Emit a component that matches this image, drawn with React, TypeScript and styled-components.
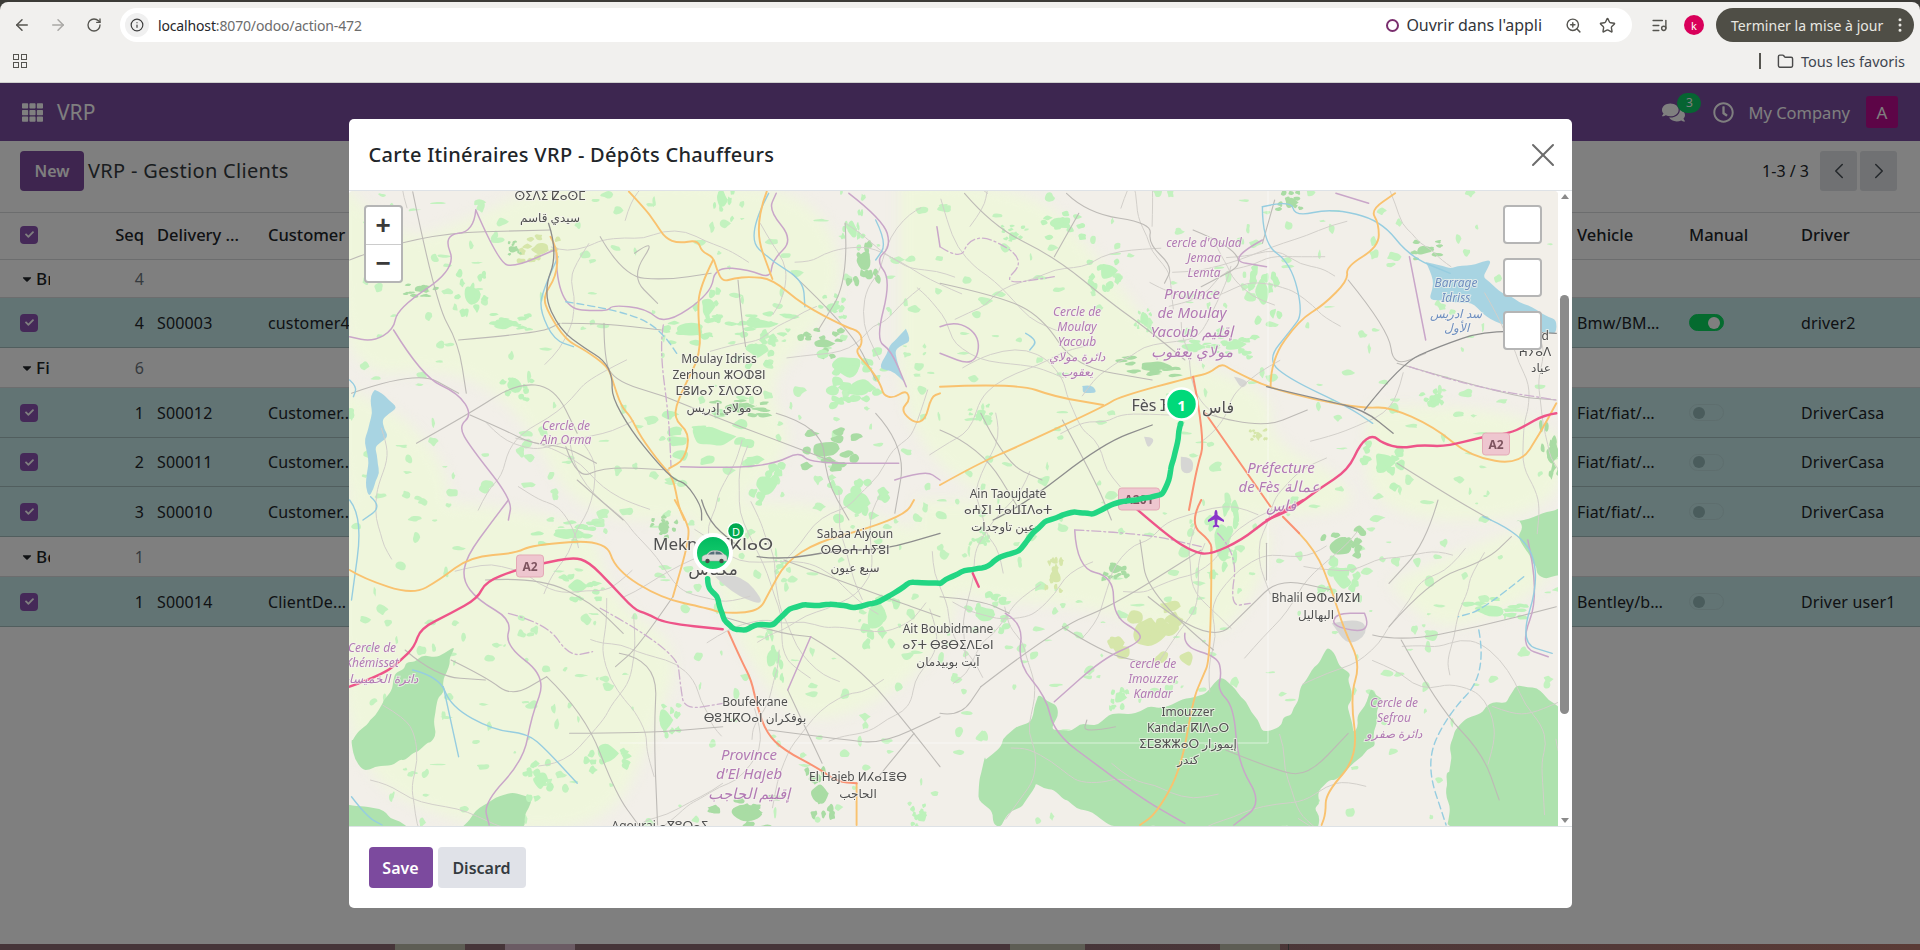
import styled, { createGlobalStyle } from "styled-components";
import {
  ArrowLeft,
  ArrowRight,
  RotateCw,
  Info,
  ZoomIn,
  Star,
  ListMusic,
  EllipsisVertical,
  Folder,
  X,
  ChevronLeft,
  ChevronRight,
} from "lucide-react";
import { FaCaretDown, FaCheck, FaComments, FaRegClock, FaTh } from "react-icons/fa";

const FONT = `"Noto Sans", "DejaVu Sans", sans-serif`;

const GlobalStyle = createGlobalStyle`
  * { box-sizing: border-box; }
  html, body { margin: 0; padding: 0; height: 100%; overflow: hidden; }
  body { font-family: ${FONT}; color: #212529; background: #fff; }
`;

const Screen = styled.div`
  height: 950px;
  display: flex;
  flex-direction: column;
  overflow: hidden;
`;

/* ---------- browser chrome ---------- */

const Chrome = styled.header`
  height: 83px;
  flex: none;
  background: #3c3b37;
  padding-top: 2px;
`;

const ChromeInner = styled.div`
  height: 81px;
  background: #f1f0ee;
  border-radius: 8px 8px 0 0;
  border-bottom: 1px solid #cfcfcd;
`;

const Toolbar = styled.div`
  height: 40px;
  display: flex;
  align-items: center;
  padding: 6px 6px 0 13px;
  color: #55544f;
`;

const NavIcon = styled.span<{ $off?: boolean }>`
  width: 30px;
  margin-right: 6px;
  display: flex;
  color: ${(p) => (p.$off ? "#a9a8a5" : "#55544f")};
  &:nth-child(3) { margin-right: 4px; margin-left: 1px; }
`;

const UrlBar = styled.div`
  width: 1512px;
  flex: none;
  height: 34px;
  background: #fff;
  border-radius: 17px;
  display: flex;
  align-items: center;
  padding: 0 6px 0 5px;
`;

const InfoChip = styled.span`
  width: 24px;
  height: 24px;
  border-radius: 50%;
  background: #f0f0f0;
  display: flex;
  align-items: center;
  justify-content: center;
  color: #3d3d3d;
  margin-right: 9px;
`;

const UrlText = styled.span`
  font-size: 14px;
  color: #6c6c6c;
  letter-spacing: -0.15px;
  b { font-weight: 400; color: #26262a; }
`;

const OpenApp = styled.span`
  margin-left: auto;
  display: flex;
  align-items: center;
  gap: 7px;
  font-size: 16px;
  color: #33353a;
  margin-right: 23px;
  letter-spacing: -0.05px;
  i {
    width: 13px;
    height: 13px;
    border: 2.5px solid #7a2e6e;
    border-radius: 50%;
  }
`;

const BarIcon = styled.span<{ $gap?: number; $lead?: number }>`
  display: flex;
  color: #55544f;
  margin-right: ${(p) => p.$gap ?? 0}px;
  margin-left: ${(p) => p.$lead ?? 0}px;
`;

const ProfileDot = styled.span`
  width: 20px;
  height: 20px;
  border-radius: 50%;
  background: #d9005a;
  color: #fff;
  font-size: 11px;
  display: flex;
  align-items: center;
  justify-content: center;
  margin: 0 12px 0 16px;
`;

const UpdatePill = styled.div`
  width: 198px;
  height: 34px;
  border-radius: 17px;
  background: #4f4e46;
  color: #e9e8e2;
  font-size: 14px;
  display: flex;
  align-items: center;
  justify-content: space-between;
  padding: 0 5px 0 15px;
  white-space: nowrap;
  letter-spacing: 0.05px;
`;

const Bookmarks = styled.div`
  height: 40px;
  display: flex;
  align-items: center;
  padding: 0 15px 2px 13px;
  color: #4a4a4a;
`;

const AppsGrid = styled.span`
  display: grid;
  grid-template-columns: 6px 6px;
  gap: 2px;
  i {
    width: 6px;
    height: 6px;
    border: 1.4px solid #55544f;
  }
`;

const BookmarkSep = styled.span`
  width: 1.5px;
  height: 16px;
  background: #55544f;
  margin: 0 16px 0 auto;
`;

const BookmarkText = styled.span`
  font-size: 14.5px;
  margin-left: 7px;
  color: #3f4650;
`;

/* ---------- odoo page under the dialog ---------- */

const Page = styled.main`
  position: relative;
  flex: 1;
  background: #fff;
  overflow: hidden;
`;

const NavBar = styled.nav`
  height: 58px;
  background: #7a4ca0;
  color: #fff;
  display: flex;
  align-items: center;
  padding: 0 22px;
`;

const AppName = styled.span`
  font-size: 21px;
  margin-left: 14px;
`;

const NavRight = styled.div`
  margin-left: auto;
  display: flex;
  align-items: center;
`;

const ChatIcon = styled.span`
  position: relative;
  display: flex;
  margin-right: 28px;
`;

const ChatBadge = styled.span`
  position: absolute;
  top: -8px;
  left: 15px;
  width: 24px;
  height: 20px;
  border-radius: 10px;
  background: #0cc864;
  font-size: 12px;
  display: flex;
  align-items: center;
  justify-content: center;
`;

const CompanyName = styled.span`
  font-size: 16.5px;
  margin: 0 16px 0 14px;
`;

const Avatar = styled.span`
  width: 32px;
  height: 32px;
  border-radius: 3px;
  background: #bb0a8f;
  font-size: 17px;
  display: flex;
  align-items: center;
  justify-content: center;
`;

const ControlPanel = styled.div`
  height: 71px;
  display: flex;
  align-items: flex-start;
  padding: 10px 23px 0 20px;
`;

const NewButton = styled.span`
  width: 64px;
  height: 40px;
  border-radius: 4px;
  background: #7c4a9e;
  color: #fff;
  font-size: 16px;
  font-weight: 600;
  display: flex;
  align-items: center;
  justify-content: center;
`;

const PageTitle = styled.span`
  font-size: 20px;
  line-height: 40px;
  margin-left: 4px;
  color: #343a40;
  letter-spacing: 0.3px;
`;

const Pager = styled.div`
  margin-left: auto;
  display: flex;
  align-items: center;
  gap: 3px;
  font-size: 16px;
  height: 40px;
  span:first-child { margin-right: 8px; }
`;

const PagerButton = styled.span`
  width: 37px;
  height: 40px;
  border-radius: 3px;
  background: #e0e2e6;
  display: flex;
  align-items: center;
  justify-content: center;
  color: #495057;
`;

const Row = styled.div<{ $h: number; $tone?: "head" | "group" | "data" }>`
  display: grid;
  grid-template-columns: 105px 44px 111px 1309px 112px 112px 127px;
  align-items: center;
  height: ${(p) => p.$h}px;
  padding-bottom: ${(p) => (p.$tone === "head" ? 3 : 0)}px;
  font-size: ${(p) => (p.$tone === "head" ? 16.5 : 16)}px;
  background: ${(p) => (p.$tone === "data" ? "#c4e8e8" : "transparent")};
  border-bottom: 1px solid ${(p) => (p.$tone === "data" ? "#a3bcbc" : "#d8dadd")};
  color: #212529;
  font-weight: ${(p) => (p.$tone === "head" ? 500 : 400)};
  letter-spacing: ${(p) => (p.$tone === "head" ? 0 : 0.15)}px;
`;

const TopRule = styled.div`
  height: 1px;
  background: #d8dadd;
`;

const Cell = styled.div<{ $muted?: boolean }>`
  padding: 0 8px;
  white-space: nowrap;
  overflow: hidden;
  text-overflow: ellipsis;
  color: ${(p) => (p.$muted ? "#6c757d" : "inherit")};
`;

const SeqCell = styled(Cell)`
  padding: 0 5px 0 0;
  text-align: right;
`;

const CheckCell = styled.div`
  padding-left: 20px;
  display: flex;
`;

const CheckBox = styled.span`
  width: 18px;
  height: 18px;
  border-radius: 4px;
  background: #8a52b0;
  color: #fff;
  display: flex;
  align-items: center;
  justify-content: center;
`;

const GroupCell = styled.div`
  padding-left: 20px;
  display: flex;
  align-items: center;
  gap: 2px;
  font-weight: 500;
`;

const GroupName = styled.span`
  width: 14px;
  overflow: hidden;
  white-space: nowrap;
  font-size: 17px;
`;

const Toggle = styled.span<{ $on?: boolean }>`
  width: 35px;
  height: 17px;
  border-radius: 9px;
  display: flex;
  align-items: center;
  padding: 0 3px;
  justify-content: ${(p) => (p.$on ? "flex-end" : "flex-start")};
  background: ${(p) => (p.$on ? "#0ad65e" : "transparent")};
  border: 1px solid ${(p) => (p.$on ? "#0ad65e" : "#bcdcdc")};
  i {
    width: 12px;
    height: 12px;
    border-radius: 50%;
    background: ${(p) => (p.$on ? "#fff" : "#94b8b8")};
  }
`;

const Backdrop = styled.div`
  position: absolute;
  inset: 0;
  background: rgba(0, 0, 0, 0.5);
  display: flex;
  justify-content: center;
  align-items: flex-start;
  padding-top: 36px;
`;

/* ---------- dialog ---------- */

const Modal = styled.section`
  width: 1223px;
  height: 789px;
  background: #fff;
  border-radius: 5px;
  display: flex;
  flex-direction: column;
  overflow: hidden;
`;

const ModalHeader = styled.div`
  height: 72px;
  flex: none;
  display: flex;
  align-items: center;
  justify-content: space-between;
  padding: 0 9px 0 20px;
  border-bottom: 1px solid #dee2e6;
`;

const ModalTitle = styled.h4`
  margin: 0;
  font-size: 20px;
  font-weight: 500;
  letter-spacing: 0.3px;
  color: #212529;
`;

const CloseIcon = styled.span`
  display: flex;
  color: #6c6c6c;
`;

const MapFrame = styled.div`
  height: 635px;
  flex: none;
  display: flex;
`;

const MapCanvas = styled.div`
  position: relative;
  width: 1209px;
  height: 635px;
  overflow: hidden;
  border-radius: 4px 4px 0 0;
  background: #f2efe9;
`;

const ZoomBar = styled.div`
  position: absolute;
  top: 14px;
  left: 15px;
  width: 39px;
  border: 2px solid #b5b5b5;
  border-radius: 4px;
  background: #fff;
  overflow: hidden;
`;

const ZoomButton = styled.div`
  height: 37px;
  display: flex;
  align-items: center;
  justify-content: center;
  font: 700 26px "Liberation Sans", sans-serif;
  color: #3a3a3a;
  & + & { border-top: 1px solid #ccc; }
`;

const SideControls = styled.div`
  position: absolute;
  top: 14px;
  right: 16px;
  display: flex;
  flex-direction: column;
  gap: 14px;
`;

const EmptyControl = styled.div`
  width: 39px;
  height: 39px;
  background: #fff;
  border: 2px solid #b5b5b5;
  border-radius: 4px;
`;

const ScrollTrack = styled.div`
  width: 14px;
  display: flex;
  flex-direction: column;
  align-items: center;
  background: #fff;
  padding: 3px 0;
`;

const ScrollArrow = styled.span<{ $down?: boolean }>`
  width: 0;
  height: 0;
  border-left: 4px solid transparent;
  border-right: 4px solid transparent;
  ${(p) => (p.$down ? "border-top: 5px solid #8a8a8a;" : "border-bottom: 5px solid #8a8a8a;")}
`;

const ScrollThumb = styled.div`
  width: 9px;
  height: 419px;
  margin: 96px 0 auto;
  border-radius: 5px;
  background: #8b8b8b;
`;

const ModalFooter = styled.div`
  flex: 1;
  display: flex;
  align-items: flex-start;
  gap: 5px;
  padding: 20px 20px 0;
  border-top: 1px solid #dee2e6;
`;

const FooterButton = styled.button<{ $primary?: boolean }>`
  height: 41px;
  width: ${(p) => (p.$primary ? 64 : 88)}px;
  border: none;
  border-radius: 4px;
  font-family: ${FONT};
  font-size: 16px;
  font-weight: 600;
  background: ${(p) => (p.$primary ? "#7c4a9e" : "#e0e2e8")};
  color: ${(p) => (p.$primary ? "#fff" : "#343a40")};
`;

const DesktopStrip = styled.footer`
  height: 6px;
  flex: none;
  display: flex;
  overflow: hidden;
  background: linear-gradient(90deg, #463539 0%, #463539 55%, #5a3b36 100%);
`;

const StripPiece = styled.span<{ $w: number; $ml: number; $c: string }>`
  width: ${(p) => p.$w}px;
  margin-left: ${(p) => p.$ml}px;
  background: ${(p) => p.$c};
  flex: none;
`;

/* ---------- map data: every point list is read off one zoomed crop ---------- */

type Pt = [number, number];

const tile = (ox: number, oy: number, sx: number) => (s: string): Pt[] =>
  s
    .trim()
    .split(/\s+/)
    .map((p) => {
      const [x, y] = p.split(",").map(Number);
      return [ox + x * sx, oy + y / 3] as Pt;
    });

const nw = tile(340, 180, 600 / 1568);
const ne = tile(940, 180, 640 / 1568);
const sw = tile(340, 500, 600 / 1568);
const se = tile(940, 500, 640 / 1568);

// same numbers every run
let seed = 4711;
const rnd = () => {
  seed = (seed * 1664525 + 1013904223) >>> 0;
  return seed / 4294967296;
};

// rounds a polyline through the midpoints of its segments
const curve = (pts: Pt[]) => {
  let d = `M${pts[0][0].toFixed(1)} ${pts[0][1].toFixed(1)}`;
  for (let i = 1; i < pts.length - 1; i++) {
    const mx = (pts[i][0] + pts[i + 1][0]) / 2;
    const my = (pts[i][1] + pts[i + 1][1]) / 2;
    d += `Q${pts[i][0].toFixed(1)} ${pts[i][1].toFixed(1)} ${mx.toFixed(1)} ${my.toFixed(1)}`;
  }
  const l = pts[pts.length - 1];
  return `${d}L${l[0].toFixed(1)} ${l[1].toFixed(1)}`;
};

// breaks each segment up and shakes the points, for natural edges
const rough = (pts: Pt[], amp: number, step = 9): Pt[] => {
  const out: Pt[] = [];
  for (let i = 0; i < pts.length - 1; i++) {
    const [ax, ay] = pts[i];
    const [bx, by] = pts[i + 1];
    const n = Math.max(1, Math.round(Math.hypot(bx - ax, by - ay) / step));
    for (let k = 0; k < n; k++) {
      out.push([ax + ((bx - ax) * k) / n + (rnd() - 0.5) * amp, ay + ((by - ay) * k) / n + (rnd() - 0.5) * amp]);
    }
  }
  out.push(pts[pts.length - 1]);
  return out;
};

const area = (pts: Pt[]) => `${curve([...pts, pts[0]])}Z`;
const roughArea = (pts: Pt[], amp: number) => area(rough([...pts, pts[0]], amp));

const blob = (cx: number, cy: number, rx: number, ry: number) => {
  const n = 9;
  const pts: Pt[] = Array.from({ length: n }, (_, i) => {
    const a = (i / n) * Math.PI * 2;
    const r = 0.5 + rnd() * 0.8;
    return [cx + Math.cos(a) * rx * r, cy + Math.sin(a) * ry * r] as Pt;
  });
  return area(pts);
};

const farmland = [
  nw("0,0 150,200 330,120 560,0 1000,0 1250,60 1330,300 1220,480 1110,620 1200,800 1000,1020 620,1020 480,700 300,560 0,600"),
  nw("0,620 200,700 330,1020 0,1020"),
  ne("-100,0 220,0 400,250 560,520 820,640 800,780 1000,900 1010,1020 -100,1020"),
  ne("1050,680 1530,660 1530,1020 1040,1020"),
  sw("0,0 650,0 700,300 900,440 820,700 700,990 330,990 0,800"),
  sw("900,0 1568,0 1640,420 1250,720 1050,480"),
  se("-60,0 820,0 800,240 660,450 420,320 -60,290"),
  se("1100,250 1530,0 1530,230 1240,420"),
];

const forests = [
  se("110,770 230,650 250,580 290,620 280,700 400,660 450,640 560,620 640,590 690,530 760,630 800,700 860,640 900,520 950,440 1000,520 1010,700 1050,560 1080,600 1060,740 1000,800 920,880 930,985 440,985 240,850 150,985 100,900"),
  se("1240,820 1260,680 1400,590 1420,545 1530,630 1530,985 1250,985"),
  se("1420,60 1530,20 1530,230 1470,230 1420,120"),
  sw("30,720 100,640 170,480 250,470 300,440 280,520 240,720 130,800 50,800"),
  sw("10,900 100,930 180,985 10,985"),
  sw("310,985 420,880 500,900 480,985"),
];

const lakes = [
  nw("90,630 110,640 150,680 110,720 125,770 90,800 105,880 75,950 65,920 75,850 65,780 85,700 80,650"),
  nw("1480,445 1495,480 1450,510 1470,590 1480,615 1440,570 1410,565 1435,500 1460,470"),
  ne("1190,245 1250,265 1310,250 1350,240 1330,290 1380,340 1460,390 1510,420 1510,460 1420,450 1350,420 1300,370 1200,360 1210,300"),
  ne("350,620 370,610 385,640 350,640"),
];

const P = "#bdf2bb";
const D = "#a9dca4";
const K = "#d6e6aa";
// crop, centre x, centre y, half width, half height, colour: in crop units
const patchSpots: [(s: string) => Pt[], number, number, number, number, string][] = [
  [nw, 345, 340, 30, 45, P], [nw, 430, 430, 45, 20, P], [nw, 210, 330, 32, 16, D], [nw, 520, 210, 38, 30, K],
  [nw, 450, 205, 16, 16, D], [nw, 920, 450, 50, 30, P], [nw, 960, 380, 25, 40, P], [nw, 1100, 430, 60, 25, P],
  [nw, 1090, 510, 40, 40, P], [nw, 970, 770, 85, 50, P], [nw, 1050, 680, 60, 20, D], [nw, 1270, 810, 60, 40, D],
  [nw, 1260, 490, 40, 30, D], [nw, 1330, 560, 60, 50, P], [nw, 1360, 620, 50, 40, P], [nw, 1370, 240, 30, 50, D],
  [nw, 1350, 970, 50, 50, P], [nw, 1110, 910, 40, 50, P], [nw, 460, 620, 30, 30, P], [nw, 1290, 380, 25, 25, P],
  [nw, 1000, 60, 20, 40, P], [nw, 1340, 150, 20, 40, P],
  [ne, 300, 130, 40, 30, P], [ne, 410, 270, 30, 40, P], [ne, 790, 340, 30, 60, P], [ne, 520, 560, 60, 20, D],
  [ne, 860, 70, 25, 25, D], [ne, 1190, 210, 30, 20, D], [ne, 1210, 660, 25, 30, P], [ne, 1090, 850, 40, 50, P],
  [ne, 180, 165, 20, 20, P], [ne, 100, 700, 20, 20, P], [ne, 720, 490, 40, 30, P], [ne, 500, 420, 15, 25, P],
  [ne, 1500, 820, 20, 60, D], [ne, 620, 500, 40, 15, P], [ne, 780, 770, 15, 15, K],
  [sw, 590, 100, 60, 25, P], [sw, 850, 85, 25, 25, D], [sw, 1060, 940, 60, 40, D], [sw, 520, 840, 30, 40, P],
  [sw, 700, 760, 40, 40, P], [sw, 1250, 880, 30, 50, D], [sw, 850, 660, 25, 40, P], [sw, 1130, 470, 20, 50, P],
  [sw, 1400, 350, 40, 60, P], [sw, 620, 260, 40, 30, P], [sw, 1520, 950, 20, 30, P], [sw, 1150, 200, 15, 15, P],
  [se, 100, 120, 20, 25, P], [se, 430, 205, 25, 25, D], [se, 115, 340, 35, 40, P], [se, 985, 140, 40, 40, D],
  [se, 985, 230, 35, 50, P], [se, 515, 400, 75, 70, K], [se, 285, 225, 20, 35, K], [se, 690, 130, 30, 80, P],
  [se, 440, 590, 20, 30, P], [se, 1350, 330, 60, 25, P],
];

// each spot becomes a core with a few loose pieces around it
const patchShapes = patchSpots.flatMap(([t, x, y, w, h, c]) => {
  const [[cx, cy]] = t(`${x},${y}`);
  const [[ex]] = t(`${x + w},${y}`);
  const rx = ex - cx;
  const ry = h / 3;
  const loose = Array.from({ length: 11 }, () => ({
    d: blob(cx + (rnd() - 0.5) * rx * 2.8, cy + (rnd() - 0.5) * ry * 2.8, rx * 0.3, ry * 0.3),
    c,
  }));
  return [{ d: roughArea(
    Array.from({ length: 8 }, (_, i) => {
      const a = (i / 8) * Math.PI * 2;
      const r = 0.45 + rnd() * 0.4;
      return [cx + Math.cos(a) * rx * r, cy + Math.sin(a) * ry * r] as Pt;
    }), 3, 5), c }, ...loose];
});

const scatter = Array.from({ length: 720 }, () =>
  blob(349 + rnd() * 1209, 191 + rnd() * 635, 1.5 + rnd() * 6, 1 + rnd() * 5)
);

// the thin road web between the named roads
const webRoads: Pt[][] = Array.from({ length: 85 }, () => {
  let x = 349 + rnd() * 1209;
  let y = 191 + rnd() * 635;
  let a = rnd() * Math.PI * 2;
  const steps = 5 + Math.floor(rnd() * 8);
  const pts: Pt[] = [[x, y]];
  for (let i = 0; i < steps; i++) {
    a += (rnd() - 0.5) * 1.1;
    const len = 12 + rnd() * 16;
    x += Math.cos(a) * len;
    y += Math.sin(a) * len;
    pts.push([x, y]);
  }
  return pts;
});

const localRoads = [
  nw("190,35 250,370 310,490 330,640"), nw("25,240 200,160 550,150"), nw("580,430 690,430 840,450"),
  nw("690,430 690,520 710,600 850,650"), nw("310,480 520,460 575,430"), nw("340,705 430,750 500,790 590,800 670,850"),
  nw("590,800 620,900 690,860 860,870"), nw("620,900 740,1020"), nw("200,790 340,700 460,610 560,620 620,760"),
  nw("680,170 740,290 850,300 970,280"), nw("770,220 830,170 760,290 830,370"), nw("1040,300 1050,420 1060,500"),
  nw("1140,700 1260,740 1270,900 1330,1020"), nw("1180,280 1330,440 1400,600"), nw("1320,130 1330,300 1250,450"),
  nw("850,650 1000,720 1140,780 1300,850"), nw("1400,700 1480,800 1450,1000"), nw("30,640 200,570 310,640"),
  ne("60,40 130,140 280,230 420,370 500,440 600,540"), ne("280,230 340,100"), ne("310,40 360,100 520,130 510,190 570,260 550,310"),
  ne("0,310 150,350 250,410 330,560 520,600"), ne("620,150 780,230 640,320"), ne("1000,300 1100,450 1110,560 1190,520"),
  ne("1120,550 1400,650 1510,660"), ne("100,700 160,850 250,900"), ne("300,720 380,900 420,1020"), ne("650,700 780,750 900,690"),
  ne("1120,850 1250,950 1350,1020"), ne("0,750 100,800 200,1000"), ne("820,60 790,190"),
  sw("1230,410 1350,490 1500,700 1568,800"), sw("380,240 520,230 660,310 740,400"), sw("290,480 380,530 450,590 540,530"),
  sw("540,530 640,640 720,880 780,975"), sw("730,460 830,480 820,700 830,975"), sw("1000,350 1150,400 1230,410"),
  sw("1120,690 1320,720 1420,730 1568,650"), sw("600,700 800,700 1000,680"), sw("170,450 250,530 380,540"),
  sw("870,290 780,440 720,500"), sw("1170,570 1260,790"), sw("1400,840 1500,700"), sw("1160,180 1420,290 1568,350"),
  se("0,290 100,300 170,340"), se("100,560 290,380 420,320 640,150"), se("300,380 400,460 510,490"), se("510,290 660,440 760,320 830,235 960,270"),
  se("1130,420 1220,620 1330,760 1370,900"), se("1060,405 1130,425 1320,380 1510,320"), se("1100,380 1200,240 1340,180 1400,110"),
  se("670,450 510,290 490,120"), se("0,640 50,650 100,560"), se("700,750 820,810 900,830 1000,700"), se("430,680 350,700 360,660"),
  se("1220,0 1190,130 1100,250"), se("800,130 800,240"),
];

const boundaries = [
  nw("355,90 350,155 270,165 305,265 150,385 140,450 85,485 25,470"), nw("355,90 415,250 460,260 560,210"),
  nw("140,450 215,590 310,640 345,705 310,740 340,800 450,960 440,1020"),
  nw("565,215 565,385 700,395 710,375 800,385 850,435 970,340 980,260 1070,270 1125,295 1130,240 1185,180 1120,90 1140,40"),
  nw("890,860 1030,865 1140,850 1200,815 1230,850 1460,850"), nw("1330,40 1420,120 1440,200 1400,240 1440,300 1400,480 1440,510 1480,620"),
  nw("1560,140 1568,200"), nw("1450,900 1530,870 1568,900"),
  ne("0,440 40,420 100,470 85,560 0,520"), ne("790,180 700,240 800,260"), ne("1150,230 1190,480"), ne("970,40 1050,70"),
  sw("440,0 400,60 330,170 320,240 360,300 450,360 430,435 540,530 500,650 480,780 375,910 390,975"),
  sw("1230,410 1170,570"), se("1440,120 1470,280 1420,440 1490,470"), se("330,90 335,205 425,230 425,350 495,400 485,430 400,475 280,605"),
  se("160,340 205,370 190,490 260,590 280,700 390,800 500,900 600,970"),
  se("600,400 595,440 680,470 690,520 680,570 720,620 730,790 790,910 720,975"), se("1040,340 1060,400 960,380 970,340 1040,340"),
];

const dashedBoundaries = [
  nw("845,435 835,500 860,720 865,860"),
  ne("0,200 50,240 70,180 120,170 210,240 150,315 280,290"),
  ne("1150,560 1300,620 1510,660"),
  sw("440,340 540,370 600,470 660,455"),
  sw("680,325 880,450 890,560 900,630 1000,610"),
  se("680,100 730,160 710,320 760,310"),
  se("330,90 500,100 640,140"),
];

const rivers = [
  nw("1120,40 1060,170 1130,245 1210,300 1215,380"), nw("570,230 525,340 525,400 560,480 610,500"),
  nw("25,600 45,620 35,650"), nw("1400,120 1430,190 1400,240"), nw("80,950 110,980 60,1020"),
  ne("790,80 790,190 860,250 890,400 860,450 800,540 860,600 1000,680 1060,730"),
  ne("790,80 860,60 870,110 960,85 1080,120 1150,230 1250,280"),
  ne("210,460 240,480 220,510"),
  sw("190,510 260,530 290,620 400,690 490,700 540,750 620,850"), sw("270,560 310,770"), sw("25,0 60,50 30,300"),
  sw("30,890 70,950 110,975"),
  se("1330,50 1430,100 1470,230 1420,430 1500,460"),
];

const dashedRivers = [
  nw("590,365 700,385 800,420 850,470 880,520"),
  se("1320,390 1340,520 1240,650 1190,790 1240,975"),
  se("1430,230 1330,330 1270,350"),
];

const primaries = [
  nw("755,35 800,90 825,130 850,175 885,190 935,180 945,215 975,230 985,270 1000,305 1030,295 1070,290 1130,297 1210,375 1320,440 1360,455 1365,495 1345,515 1390,570 1415,620 1420,645 1445,655 1480,630 1490,660 1465,690 1500,730 1530,720 1545,650 1568,640"),
  nw("975,240 940,320 935,400 945,520 890,640 870,715 915,760 900,840 860,865"),
  nw("1115,35 1080,140 1130,297"),
  nw("550,170 570,210 565,290 530,350 545,400 590,480 640,510 700,560 712,600 735,680 760,710 785,770 840,855 870,890 885,980 900,1020"),
  ne("0,915 95,850 190,800 400,680 440,650 620,590 660,580 690,550 715,570 800,620 920,660 1040,685 1100,680 1210,740 1300,830 1420,855 1470,760 1510,670"),
  ne("0,620 190,610 280,650 400,675"),
  ne("810,620 810,540 880,420 940,375 1000,300 995,260 1075,200 1075,130 1055,90 1115,40"),
  sw("25,210 60,235 190,285 260,240 340,170 460,160 500,135 695,118 720,210 840,295 960,325 1000,340 1095,335 1120,280 1165,185 1250,125 1380,85 1480,40 1500,0"),
  sw("875,0 905,60 915,110 870,290"),
  sw("1350,850 1350,975"),
  se("665,150 665,470 640,540 620,600 590,810 530,940 490,975"),
  se("880,100 920,150 960,270 990,390 1030,490 1005,590 1025,770 945,880 945,940 935,975"),
];

const trunks = [
  sw("1015,395 1050,485 1075,540 1090,620 1115,700 1160,750 1250,805 1300,845 1350,850"),
  se("640,0 610,70 665,125 665,160"),
  se("840,50 880,100"),
  ne("620,590 650,780 630,860 610,990"),
  ne("650,700 810,980"),
];

const motorways = [
  ne("1510,700 1480,705 1430,740 1395,760 1330,770 1240,800 1175,795 1130,805 1085,790 1060,765 1030,790 1000,870 930,925 860,990 800,1020"),
  sw("25,560 110,525 160,480 195,440 210,385 290,340 360,295 380,245 460,210 530,190 610,172 650,185 710,255 770,330 800,340 850,370 1000,388"),
  se("480,25 560,110 620,155 660,165 740,120 800,60 890,0"),
  se("80,220 95,260"),
];

const rails = [
  nw("545,130 570,215 530,340 575,450 640,505 690,540 712,590 710,650 760,750 830,850 875,900 905,910 945,980 945,1020"),
  ne("130,1020 200,980 400,790 520,735"),
  ne("800,620 940,660 1040,690 1110,760"),
  ne("1040,690 1130,550 1220,500 1340,450 1510,460"),
  sw("1090,170 1160,180 1300,150 1420,150 1568,100"),
  sw("945,0 960,60 1030,130"),
];

const route = curve(
  rough(
    [
      ...sw("960,235 960,260 985,290 1005,360 1030,390 1060,390 1090,375 1130,375 1175,325 1210,315 1290,315 1340,322 1400,310 1440,285 1490,245 1568,250"),
      ...se("0,250 60,210 110,205 150,170 195,155 225,100 255,65 330,35 375,42 420,15 450,5"),
      ...ne("500,955 545,945 560,900 580,800 590,730"),
    ],
    1.6,
    7
  )
);

const towns = [
  sw("980,230 1040,210 1120,320 1040,290"),
  ne("590,830 620,830 620,880 590,880"),
  se("960,370 1030,350 1050,400 1000,440"),
  ne("500,770 530,770 510,810"),
  ne("720,590 760,600 740,630"),
];

type Kind = "place" | "admin" | "water";
const labels: [number, number, string, Kind, number?][] = [
  [550, 195, "ⵙⵉⴷⵉ ⵇⴰⵙⵎ", "place"], [550, 217, "سيدي قاسم", "place"],
  [719, 358, "Moulay Idriss", "place"], [719, 374, "Zerhoun ⵣⵔⵀⵓⵏ", "place"], [719, 390, "ⵎⵓⵍⴰⵢ ⵉⴷⵔⵉⵙ", "place"], [719, 407, "مولاي إدريس", "place"],
  [566, 425, "Cercle de", "admin"], [566, 439, "Ain Orma", "admin"],
  [1204, 242, "cercle d'Oulad", "admin"], [1204, 257, "Jemaa", "admin"], [1204, 272, "Lemta", "admin"],
  [1192, 293, "Province", "admin", 15], [1192, 312, "de Moulay", "admin", 15], [1192, 331, "Yacoub إقليم", "admin", 15], [1192, 351, "مولاي يعقوب", "admin", 15],
  [1077, 311, "Cercle de", "admin"], [1077, 326, "Moulay", "admin"], [1077, 341, "Yacoub", "admin"], [1077, 356, "دائرة مولاي", "admin"], [1077, 371, "يعقوب", "admin"],
  [1456, 282, "Barrage", "water"], [1456, 297, "Idriss", "water"], [1456, 313, "سد ادريس", "water"], [1456, 327, "الأول", "water"],
  [1535, 335, "Ayad", "place"], [1535, 351, "ⵄⵢⴰⴷ", "place"], [1541, 367, "عياد", "place"],
  [1144, 405, "Fès", "place", 16], [1178, 405, "ⴼⴰⵙ", "place", 16], [1218, 407, "فاس", "place", 16],
  [1281, 467, "Préfecture", "admin", 15], [1279, 486, "de Fès عمالة", "admin", 15], [1281, 505, "فاس", "admin", 15],
  [1008, 493, "Ain Taoujdate", "place"], [1008, 509, "ⴰⵄⵉⵏ ⵜⴰⵡⵊⴷⴰⵜ", "place"], [1003, 526, "عين تاوجدات", "place"],
  [855, 533, "Sabaa Aiyoun", "place"], [855, 549, "ⵙⴱⴰⵄ ⵄⵢⵓⵏ", "place"], [855, 567, "سبع عيون", "place"],
  [713, 543, "Meknès ⵎⴽⵏⴰⵙ", "place", 17], [713, 568, "مكناس", "place", 17],
  [948, 628, "Ait Boubidmane", "place"], [948, 644, "ⴰⵢⵜ ⴱⵓⴱⵉⴷⵎⴰⵏ", "place"], [948, 661, "آيت بوبيدمان", "place"],
  [755, 701, "Boufekrane", "place"], [755, 717, "ⴱⵓⴼⴽⵔⴰⵏ بوفكران", "place"],
  [749, 754, "Province", "admin", 15], [749, 773, "d'El Hajeb", "admin", 15], [749, 793, "إقليم الحاجب", "admin", 15],
  [858, 776, "El Hajeb ⵍⵃⴰⵊⴻⴱ", "place"], [858, 793, "الحاجب", "place"],
  [660, 825, "Agourai ⴰⴳⵓⵔⴰⵢ", "place"],
  [372, 647, "Cercle de", "admin"], [372, 662, "Khémisset", "admin"], [378, 678, "دائرة الخميسات", "admin"],
  [1153, 663, "cercle de", "admin"], [1153, 678, "Imouzzer", "admin"], [1153, 693, "Kandar", "admin"],
  [1188, 711, "Imouzzer", "place"], [1188, 727, "Kandar ⴽⵏⴷⴰⵔ", "place"], [1188, 743, "ⵉⵎⵓⵣⵣⴰⵔ إيموزار", "place"], [1188, 759, "كندر", "place"],
  [1316, 597, "Bhalil ⴱⵀⴰⵍⵉⵍ", "place"], [1316, 614, "البهاليل", "place"],
  [1394, 702, "Cercle de", "admin"], [1394, 717, "Sefrou", "admin"], [1394, 733, "دائرة صفرو", "admin"],
];

const shields: [number, number, string, number][] = [
  [1139, 499, "A201", 41],
  [1496, 444, "A2", 27],
  [530, 566, "A2", 27],
];

const labelStyle: Record<Kind, { fill: string; italic: boolean }> = {
  place: { fill: "#505050", italic: false },
  admin: { fill: "#b27ab4", italic: true },
  water: { fill: "#6f8fc0", italic: true },
};

const Strokes = ({ lines, color, width, dash }: { lines: Pt[][]; color: string; width: number; dash?: string }) => (
  <g fill="none" stroke={color} strokeWidth={width} strokeLinejoin="round" strokeLinecap="round" strokeDasharray={dash}>
    {lines.map((l, i) => (
      <path key={i} d={curve(l)} />
    ))}
  </g>
);

const forestPaths = forests.map((a) => roughArea(a, 7));
const lakePaths = lakes.map((a) => roughArea(a, 2));

const RouteMap = () => (
  <svg width="1209" height="635" viewBox="349 191 1209 635" style={{ display: "block" }}>
    <rect x="349" y="191" width="1209" height="635" fill="#f2efe9" />
    <g style={{ filter: "blur(7px)" }}>
      {farmland.map((a, i) => (
        <path key={i} d={area(a)} fill="#eff6dc" />
      ))}
    </g>
    <g style={{ filter: "blur(0.5px)" }}>
      {scatter.map((d, i) => (
        <path key={i} d={d} fill="#c3f2bf" />
      ))}
      {forestPaths.map((d, i) => (
        <path key={i} d={d} fill="#aee2ae" />
      ))}
      {patchShapes.map((s, i) => (
        <path key={i} d={s.d} fill={s.c} />
      ))}
      {lakePaths.map((d, i) => (
        <path key={i} d={d} fill="#a8d4e2" />
      ))}
      {towns.map((a, i) => (
        <path key={i} d={area(a)} fill="#d6d6d4" />
      ))}
      <path d="M1268 191V743M620 743H1268" fill="none" stroke="#fff" strokeOpacity=".55" strokeWidth="1" />
      <Strokes lines={webRoads} color="#d2cfca" width={1} />
      <Strokes lines={localRoads} color="#bdbab6" width={1.1} />
      <Strokes lines={boundaries} color="#c9a6c9" width={1.5} />
      <Strokes lines={dashedBoundaries} color="#cdb0cd" width={1.3} dash="9 3 2 3" />
      <Strokes lines={rivers} color="#96cde0" width={1.4} />
      <Strokes lines={dashedRivers} color="#96cde0" width={1.4} dash="7 4" />
      <Strokes lines={primaries} color="#f9c26f" width={1.9} />
      <Strokes lines={trunks} color="#fa9273" width={2} />
      <Strokes lines={motorways} color="#ee5489" width={2.4} />
      <Strokes lines={rails} color="#8d8d8d" width={1.3} />
      {shields.map(([x, y, t, w]) => (
        <g key={`${t}${x}`}>
          <rect x={x - w / 2} y={y - 11} width={w} height={22} rx={3} fill="#eec6cf" stroke="#e3a9b6" />
          <text x={x} y={y} textAnchor="middle" dominantBaseline="central" fontSize="12" fontWeight="700" fill="#7f5560" fontFamily={FONT}>
            {t}
          </text>
        </g>
      ))}
      {labels.map(([x, y, t, k, size]) => (
        <text
          key={`${x}${y}`}
          x={x}
          y={y}
          textAnchor="middle"
          dominantBaseline="central"
          fontSize={size ?? 12}
          fontStyle={labelStyle[k].italic ? "italic" : "normal"}
          fill={labelStyle[k].fill}
          stroke="#f5f3ee"
          strokeOpacity=".7"
          strokeWidth="2"
          paintOrder="stroke"
          fontFamily={FONT}
        >
          {t}
        </text>
      ))}
      <path
        d="M1216 510c1.200 0 1.600 2 1.600 5l6.400 5v2l-6.400-2.400-.5 4.800 2 1.600v1.600l-3.100-.9-3.100.9v-1.600l2-1.600-.5-4.800-6.400 2.400v-2l6.400-5c0-3 .4-5 1.600-5z"
        fill="#8a35c9"
      />
    </g>
    <path d={route} fill="none" stroke="#22d683" strokeWidth="5.5" strokeLinecap="round" strokeLinejoin="round" />
    <defs>
      <linearGradient id="depotFill" x1="0" y1="0" x2="0" y2="1">
        <stop offset="0" stopColor="#00b85f" />
        <stop offset="1" stopColor="#1fd672" />
      </linearGradient>
    </defs>
    <circle cx="1181.500" cy="404" r="15.500" fill="#00d97a" stroke="#fff" strokeWidth="2.500" />
    <text x="1181.500" y="404.500" textAnchor="middle" dominantBaseline="central" fontSize="15" fontWeight="700" fill="#fff" fontFamily={FONT}>
      1
    </text>
    <circle cx="713" cy="553" r="18" fill="url(#depotFill)" stroke="#fff" strokeWidth="4" />
    <g>
      <path d="M702 561v-3.500c0-1.500 2-2.500 4.500-3l3.500-3c1-.7 3-1 5-1 3 0 5 .5 6.500 1.500l3 2.500c1.500.5 2.500 1.500 2.500 3v3.500z" fill="#dcdcd8" stroke="#9a9a98" strokeWidth=".5" />
      <path d="M708 554.500l2.700-2.300c.8-.5 2.200-.7 3.800-.7v3zM715.500 551.500c2.300 0 4 .3 5 1l2.300 2h-7.300z" fill="#56707a" />
      <circle cx="707.500" cy="561" r="2.200" fill="#4a4a4a" />
      <circle cx="721.500" cy="561" r="2.200" fill="#4a4a4a" />
    </g>
    <circle cx="736" cy="531" r="8.500" fill="#00a94f" stroke="#fff" strokeWidth="1.500" />
    <text x="736" y="531.500" textAnchor="middle" dominantBaseline="central" fontSize="11" fill="#fff" fontFamily={FONT}>
      D
    </text>
  </svg>
);

/* ---------- table data ---------- */

type DataRow = { seq: number; so: string; customer: string; vehicle: string; manual?: boolean; driver: string; h: number };
type Group = { name: string; count: number; h: number; rows: DataRow[] };

const groups: Group[] = [
  {
    name: "Bmw",
    count: 4,
    h: 38,
    rows: [{ seq: 4, so: "S00003", customer: "customer4", vehicle: "Bmw/BM…", manual: true, driver: "driver2", h: 50 }],
  },
  {
    name: "Fiat",
    count: 6,
    h: 40,
    rows: [
      { seq: 1, so: "S00012", customer: "Customer...", vehicle: "Fiat/fiat/…", driver: "DriverCasa", h: 50 },
      { seq: 2, so: "S00011", customer: "Customer...", vehicle: "Fiat/fiat/…", driver: "DriverCasa", h: 49 },
      { seq: 3, so: "S00010", customer: "Customer...", vehicle: "Fiat/fiat/…", driver: "DriverCasa", h: 50 },
    ],
  },
  {
    name: "Bentley",
    count: 1,
    h: 40,
    rows: [{ seq: 1, so: "S00014", customer: "ClientDe...", vehicle: "Bentley/b…", driver: "Driver user1", h: 50 }],
  },
];

const Check = () => (
  <CheckBox>
    <FaCheck size={9} />
  </CheckBox>
);

const App = () => (
  <Screen>
    <GlobalStyle />
    <Chrome>
      <ChromeInner>
        <Toolbar>
          <NavIcon>
            <ArrowLeft size={18} />
          </NavIcon>
          <NavIcon $off>
            <ArrowRight size={18} />
          </NavIcon>
          <NavIcon>
            <RotateCw size={16} />
          </NavIcon>
          <UrlBar>
            <InfoChip>
              <Info size={14} />
            </InfoChip>
            <UrlText>
              <b>localhost</b>:8070/odoo/action-472
            </UrlText>
            <OpenApp>
              <i />
              Ouvrir dans l'appli
            </OpenApp>
            <BarIcon $gap={17}>
              <ZoomIn size={17} />
            </BarIcon>
            <BarIcon $gap={10}>
              <Star size={17} />
            </BarIcon>
          </UrlBar>
          <BarIcon $lead={19}>
            <ListMusic size={17} />
          </BarIcon>
          <ProfileDot>k</ProfileDot>
          <UpdatePill>
            Terminer la mise à jour
            <EllipsisVertical size={18} />
          </UpdatePill>
        </Toolbar>
        <Bookmarks>
          <AppsGrid>
            <i />
            <i />
            <i />
            <i />
          </AppsGrid>
          <BookmarkSep />
          <Folder size={17} />
          <BookmarkText>Tous les favoris</BookmarkText>
        </Bookmarks>
      </ChromeInner>
    </Chrome>

    <Page>
      <NavBar>
        <FaTh size={21} />
        <AppName>VRP</AppName>
        <NavRight>
          <ChatIcon>
            <FaComments size={23} />
            <ChatBadge>3</ChatBadge>
          </ChatIcon>
          <FaRegClock size={21} />
          <CompanyName>My Company</CompanyName>
          <Avatar>A</Avatar>
        </NavRight>
      </NavBar>
      <ControlPanel>
        <NewButton>New</NewButton>
        <PageTitle>VRP - Gestion Clients</PageTitle>
        <Pager>
          <span>1-3 / 3</span>
          <PagerButton>
            <ChevronLeft size={26} strokeWidth={1.4} />
          </PagerButton>
          <PagerButton>
            <ChevronRight size={26} strokeWidth={1.4} />
          </PagerButton>
        </Pager>
      </ControlPanel>
      <TopRule />
      <Row $h={47} $tone="head">
        <CheckCell>
          <Check />
        </CheckCell>
        <SeqCell>Seq</SeqCell>
        <Cell>Delivery ...</Cell>
        <Cell>Customer</Cell>
        <Cell>Vehicle</Cell>
        <Cell>Manual</Cell>
        <Cell>Driver</Cell>
      </Row>
      {groups.map((g) => (
        <div key={g.name}>
          <Row $h={g.h} $tone="group">
            <GroupCell>
              <FaCaretDown size={14} />
              <GroupName>{g.name}</GroupName>
            </GroupCell>
            <SeqCell $muted>{g.count}</SeqCell>
          </Row>
          {g.rows.map((r) => (
            <Row key={r.so} $h={r.h} $tone="data">
              <CheckCell>
                <Check />
              </CheckCell>
              <SeqCell>{r.seq}</SeqCell>
              <Cell>{r.so}</Cell>
              <Cell>{r.customer}</Cell>
              <Cell>{r.vehicle}</Cell>
              <Cell>
                <Toggle $on={r.manual}>
                  <i />
                </Toggle>
              </Cell>
              <Cell>{r.driver}</Cell>
            </Row>
          ))}
        </div>
      ))}

      <Backdrop>
        <Modal>
          <ModalHeader>
            <ModalTitle>Carte Itinéraires VRP - Dépôts Chauffeurs</ModalTitle>
            <CloseIcon>
              <X size={40} strokeWidth={1.2} />
            </CloseIcon>
          </ModalHeader>
          <MapFrame>
            <MapCanvas>
              <RouteMap />
              <ZoomBar>
                <ZoomButton>+</ZoomButton>
                <ZoomButton>−</ZoomButton>
              </ZoomBar>
              <SideControls>
                <EmptyControl />
                <EmptyControl />
                <EmptyControl />
              </SideControls>
            </MapCanvas>
            <ScrollTrack>
              <ScrollArrow />
              <ScrollThumb />
              <ScrollArrow $down />
            </ScrollTrack>
          </MapFrame>
          <ModalFooter>
            <FooterButton $primary>Save</FooterButton>
            <FooterButton>Discard</FooterButton>
          </ModalFooter>
        </Modal>
      </Backdrop>
    </Page>

    <DesktopStrip>
      <StripPiece $w={70} $ml={395} $c="#5d5d54" />
      <StripPiece $w={70} $ml={40} $c="#6b5b64" />
      <StripPiece $w={75} $ml={435} $c="#5d5d54" />
      <StripPiece $w={60} $ml={135} $c="#5d5d54" />
      <StripPiece $w={1} $ml={8} $c="#2a2a2a" />
    </DesktopStrip>
  </Screen>
);

export default App;
